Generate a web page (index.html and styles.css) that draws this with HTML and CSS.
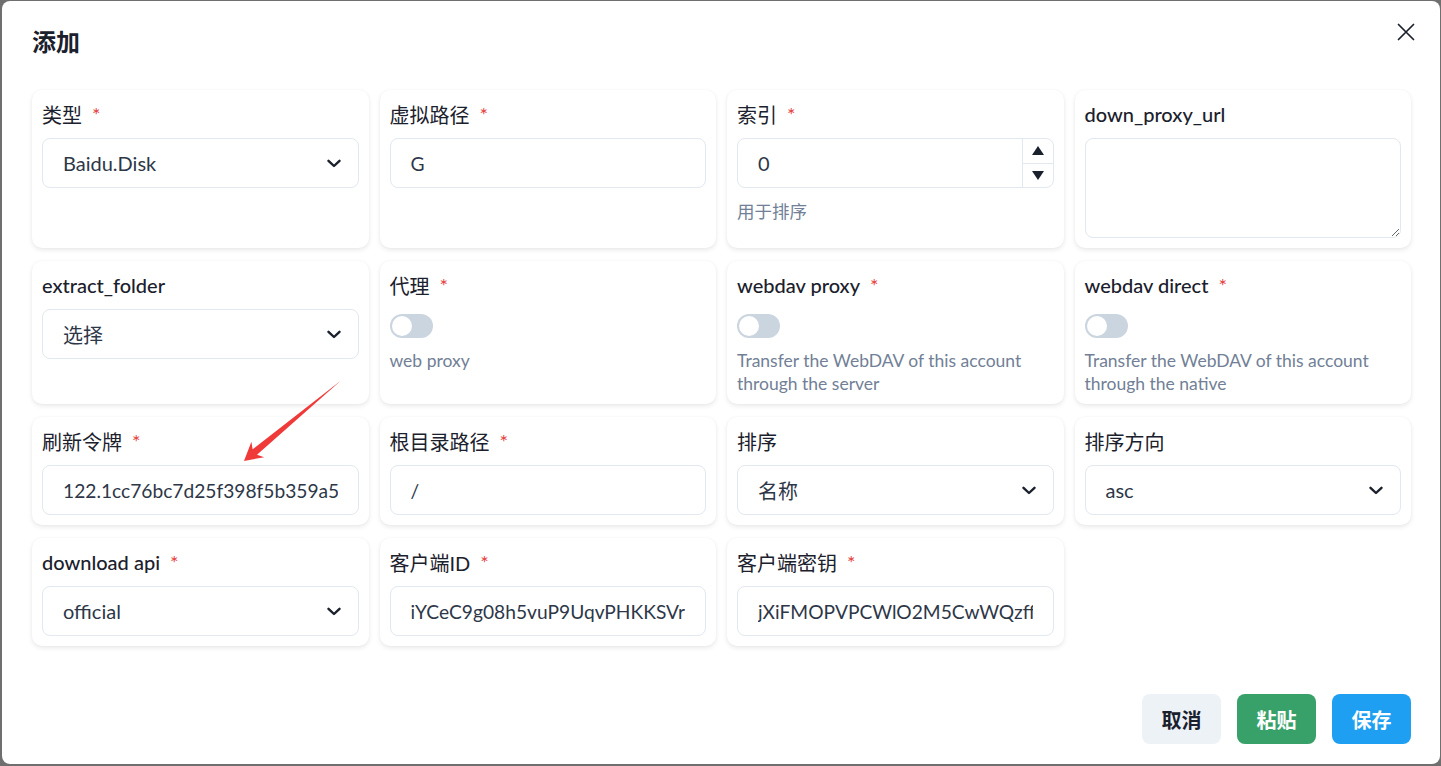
FILE: index.html
```html
<!DOCTYPE html>
<html lang="zh">
<head>
<meta charset="utf-8">
<title>添加</title>
<link rel="stylesheet" href="styles.css">
</head>
<body>
<div class="backdrop">
  <div class="modal">
    <header class="modal-header">
      <h2 class="modal-title">添加</h2>
      <button class="close-btn" aria-label="close">
        <svg width="18" height="18" viewBox="0 0 18 18"><path d="M1.5 1.5L16.5 16.5M16.5 1.5L1.5 16.5" stroke="#1a202c" stroke-width="1.7" stroke-linecap="round"/></svg>
      </button>
    </header>

    <div class="modal-body">
      <div class="form-grid">
        <div class="card">
          <div class="label">类型<span class="req">*</span></div>
          <div class="select"><span>Baidu.Disk</span><svg class="chev" width="14" height="9" viewBox="0 0 14 9"><path d="M1.5 1.8L7 7L12.5 1.8" fill="none" stroke="#1a202c" stroke-width="2.4" stroke-linecap="round" stroke-linejoin="round"/></svg></div>
        </div>
        <div class="card">
          <div class="label">虚拟路径<span class="req">*</span></div>
          <input class="input" value="G">
        </div>
        <div class="card">
          <div class="label">索引<span class="req">*</span></div>
          <div class="number">
            <input class="number-input" value="0">
            <div class="stepper">
              <div class="step"><svg width="12" height="9" viewBox="0 0 12 9"><path d="M6 0L12 9H0Z" fill="#1a202c"/></svg></div>
              <div class="step step-down"><svg width="12" height="9" viewBox="0 0 12 9"><path d="M0 0H12L6 9Z" fill="#1a202c"/></svg></div>
            </div>
          </div>
          <div class="helper helper-gap">用于排序</div>
        </div>
        <div class="card">
          <div class="label latin">down_proxy_url</div>
          <textarea class="textarea"></textarea>
        </div>

        <div class="card">
          <div class="label latin">extract_folder</div>
          <div class="select"><span>选择</span><svg class="chev" width="14" height="9" viewBox="0 0 14 9"><path d="M1.5 1.8L7 7L12.5 1.8" fill="none" stroke="#1a202c" stroke-width="2.4" stroke-linecap="round" stroke-linejoin="round"/></svg></div>
        </div>
        <div class="card">
          <div class="label">代理<span class="req">*</span></div>
          <div class="switch"><span class="knob"></span></div>
          <div class="helper switch-help">web proxy</div>
        </div>
        <div class="card">
          <div class="label latin">webdav proxy<span class="req">*</span></div>
          <div class="switch"><span class="knob"></span></div>
          <div class="helper switch-help">Transfer the WebDAV of this account through the server</div>
        </div>
        <div class="card">
          <div class="label latin">webdav direct<span class="req">*</span></div>
          <div class="switch"><span class="knob"></span></div>
          <div class="helper switch-help">Transfer the WebDAV of this account through the native</div>
        </div>

        <div class="card">
          <div class="label">刷新令牌<span class="req">*</span></div>
          <input class="input" value="122.1cc76bc7d25f398f5b359a5e6d1f0a3c.YmKx8Qe2vTnLpZ0">
        </div>
        <div class="card">
          <div class="label">根目录路径<span class="req">*</span></div>
          <input class="input" value="/">
        </div>
        <div class="card">
          <div class="label">排序</div>
          <div class="select"><span>名称</span><svg class="chev" width="14" height="9" viewBox="0 0 14 9"><path d="M1.5 1.8L7 7L12.5 1.8" fill="none" stroke="#1a202c" stroke-width="2.4" stroke-linecap="round" stroke-linejoin="round"/></svg></div>
        </div>
        <div class="card">
          <div class="label">排序方向</div>
          <div class="select"><span>asc</span><svg class="chev" width="14" height="9" viewBox="0 0 14 9"><path d="M1.5 1.8L7 7L12.5 1.8" fill="none" stroke="#1a202c" stroke-width="2.4" stroke-linecap="round" stroke-linejoin="round"/></svg></div>
        </div>

        <div class="card">
          <div class="label latin">download api<span class="req">*</span></div>
          <div class="select"><span>official</span><svg class="chev" width="14" height="9" viewBox="0 0 14 9"><path d="M1.5 1.8L7 7L12.5 1.8" fill="none" stroke="#1a202c" stroke-width="2.4" stroke-linecap="round" stroke-linejoin="round"/></svg></div>
        </div>
        <div class="card">
          <div class="label">客户端ID<span class="req">*</span></div>
          <input class="input" value="iYCeC9g08h5vuP9UqvPHKKSVrKFXGa1v">
        </div>
        <div class="card">
          <div class="label">客户端密钥<span class="req">*</span></div>
          <input class="input" value="jXiFMOPVPCWlO2M5CwWQzffpNPaGYRBG">
        </div>
      </div>
    </div>

    <footer class="modal-footer">
      <button class="btn btn-cancel">取消</button>
      <button class="btn btn-paste">粘贴</button>
      <button class="btn btn-save">保存</button>
    </footer>

    <svg class="annotation" width="110" height="95" viewBox="0 0 110 95">
      <polygon points="4,85 24.2,81.2 17,78.7 101,4.5 12.6,73.3 11.4,65.8" fill="#f03a3a"/>
    </svg>
  </div>
</div>
</body>
</html>
```

FILE: styles.css
```css
html, body {
  margin: 0;
  padding: 0;
}

body {
  background: #6f6f6f;
  font-family: Lato, "Noto Sans CJK SC", sans-serif;
  color: #1a202c;
}

.backdrop {
  height: 766px;
  box-sizing: border-box;
  padding: 1px 1px 2px 2px;
  display: flex;
}

.modal {
  flex: 1;
  background: #ffffff;
  border-radius: 8px;
  position: relative;
  display: flex;
  flex-direction: column;
}

.modal-header {
  display: flex;
  justify-content: space-between;
  align-items: flex-start;
  padding: 24px 25px 0 30px;
}

.modal-title {
  margin: 0;
  font-size: 24px;
  line-height: 34px;
  font-weight: 700;
  color: #1a202c;
}

.close-btn {
  border: none;
  background: none;
  padding: 0;
  width: 18px;
  height: 18px;
  margin-top: -2px;
  display: flex;
}

.modal-body {
  padding: 31px 29px 0 30px;
}

.form-grid {
  display: grid;
  grid-template-columns: repeat(4, 1fr);
  column-gap: 11px;
  row-gap: 13px;
}

.card {
  background: #ffffff;
  border-radius: 10px;
  padding: 10px;
  box-shadow: 0 2px 5px rgba(0, 0, 0, 0.09), 0 0 2px rgba(0, 0, 0, 0.04);
  display: flex;
  flex-direction: column;
  min-width: 0;
}

.label {
  display: flex;
  align-items: center;
  height: 28px;
  font-size: 20px;
  font-weight: 400;
  color: #1a202c;
  margin-bottom: 10px;
  white-space: nowrap;
}

.label.latin {
  font-weight: 500;
}

.req {
  color: #e53e3e;
  margin-left: 10px;
  font-weight: 400;
}

.input,
.select,
.number,
.textarea {
  box-sizing: border-box;
  width: 100%;
  border: 1px solid #e2e8f0;
  border-radius: 8px;
  background: #ffffff;
  font-family: inherit;
  font-size: 20px;
  color: #2d3748;
}

.input {
  height: 50px;
  padding: 0 20px;
  outline: none;
  display: block;
  font-size: 19.2px;
}

.select {
  height: 50px;
  padding: 0 17px 0 20px;
  display: flex;
  align-items: center;
  justify-content: space-between;
}

.chev {
  display: block;
}

.number {
  height: 50px;
  display: flex;
  overflow: hidden;
}

.number-input {
  flex: 1;
  min-width: 0;
  border: none;
  outline: none;
  padding: 0 20px;
  font-family: inherit;
  font-size: 20px;
  color: #2d3748;
  background: transparent;
}

.stepper {
  width: 30px;
  border-left: 1px solid #e2e8f0;
  display: flex;
  flex-direction: column;
}

.step {
  flex: 1;
  display: flex;
  align-items: center;
  justify-content: center;
}

.step svg {
  display: block;
}

.step-down {
  border-top: 1px solid #e2e8f0;
}

.textarea {
  height: 100px;
  display: block;
  resize: vertical;
  padding: 8px 12px;
  outline: none;
}

.helper {
  font-size: 17.5px;
  line-height: 23px;
  color: #718096;
}

.helper-gap {
  margin-top: 12px;
}

.switch {
  width: 43px;
  height: 24px;
  border-radius: 12px;
  background: #cbd5e0;
  margin-top: 5px;
  box-sizing: border-box;
  padding: 2px;
  display: flex;
}

.knob {
  width: 20px;
  height: 20px;
  border-radius: 50%;
  background: #ffffff;
}

.switch-help {
  margin-top: 11px;
  margin-bottom: -1px;
}

.modal-footer {
  margin-top: auto;
  display: flex;
  justify-content: flex-end;
  gap: 16px;
  padding: 0 29px 20px 0;
}

.btn {
  width: 79px;
  height: 50px;
  border: none;
  border-radius: 8px;
  font-family: "Noto Sans CJK SC", sans-serif;
  font-size: 20px;
  font-weight: 700;
  padding: 0;
}

.btn-cancel {
  background: #edf2f7;
  color: #1a202c;
}

.btn-paste {
  background: #38a169;
  color: #ffffff;
}

.btn-save {
  background: #1e9ff2;
  color: #ffffff;
}

.annotation {
  position: absolute;
  left: 238px;
  top: 375px;
}
```
